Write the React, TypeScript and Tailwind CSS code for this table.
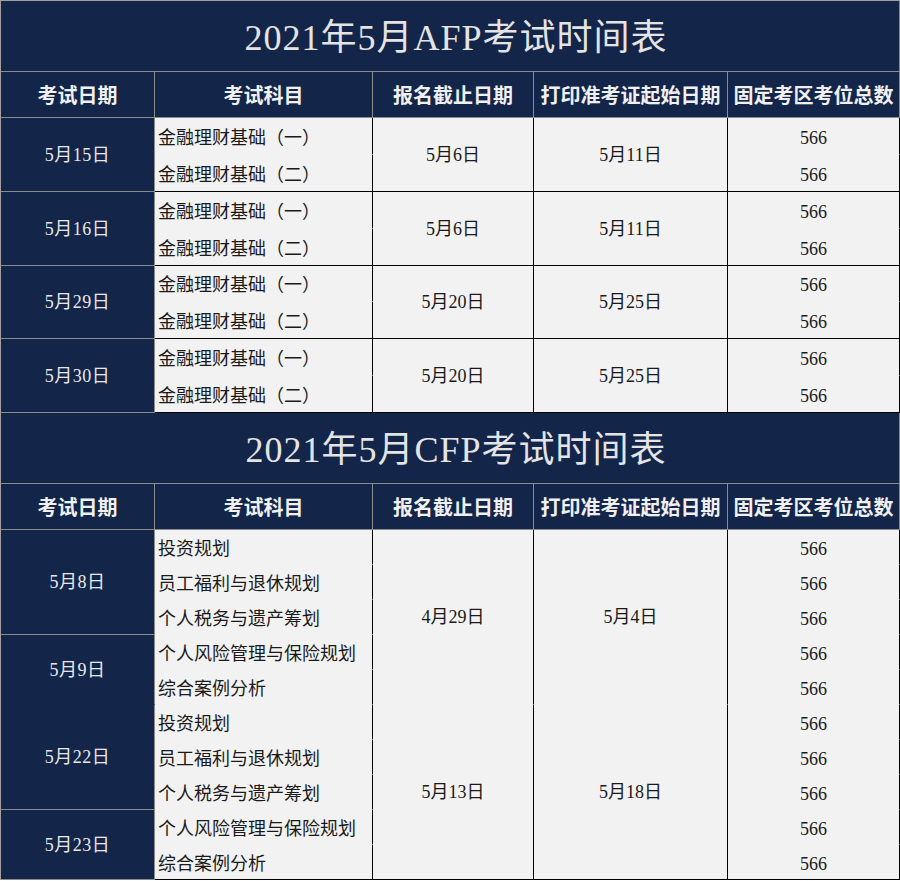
const NAVY = "bg-[#132549]"

const SERIF = "font-['Liberation_Serif','Noto_Sans_CJK_SC',serif]"
const SANS = "font-['Noto_Sans_CJK_SC',sans-serif]"

const HEADERS = ["考试日期", "考试科目", "报名截止日期", "打印准考证起始日期", "固定考区考位总数"]

const AFP = [
  { date: "5月15日", reg: "5月6日", print: "5月11日", h: [37, 37] },
  { date: "5月16日", reg: "5月6日", print: "5月11日", h: [37, 37] },
  { date: "5月29日", reg: "5月20日", print: "5月25日", h: [36, 37] },
  { date: "5月30日", reg: "5月20日", print: "5月25日", h: [37, 37] },
]

const CFP_SUBJECTS = [
  "投资规划",
  "员工福利与退休规划",
  "个人税务与遗产筹划",
  "个人风险管理与保险规划",
  "综合案例分析",
]

// date cells keyed by the sub-row they start on
const CFP_DATES: Record<number, { label: string; span: number; line: boolean }> = {
  0: { label: "5月8日", span: 3, line: true },
  3: { label: "5月9日", span: 2, line: false },
  5: { label: "5月22日", span: 3, line: true },
  8: { label: "5月23日", span: 2, line: true },
}

const CFP_GROUPS: Record<number, { reg: string; print: string; last: boolean }> = {
  0: { reg: "4月29日", print: "5月4日", last: false },
  5: { reg: "5月13日", print: "5月18日", last: true },
}

function TitleRow({ text }: { text: string }) {
  return (
    <tr className="h-[71px]">
      <td
        colSpan={5}
        className={`${NAVY} border-b border-r border-[#8c8c8c] pl-[12px] pt-[4px] text-center text-[36px] leading-none tracking-[1px] text-[#e4e4e4] ${SERIF}`}
      >
        {text}
      </td>
    </tr>
  )
}

function HeaderRow() {
  return (
    <tr className="h-[46px]">
      {HEADERS.map((h) => (
        <td
          key={h}
          className={`${NAVY} border-b border-r border-[#8c8c8c] text-center text-[20px] font-bold leading-none text-[#f0f0f0] ${SANS}`}
        >
          {h}
        </td>
      ))}
    </tr>
  )
}

const dateCell = `${NAVY} border-r border-[#8c8c8c] text-center text-[18px] leading-none tracking-[0.5px] text-[#e8e8e8] ${SERIF}`
const bodyCell = `bg-[#f2f2f2] border-r border-black text-[18px] leading-none text-[#1a1a1a] ${SERIF}`

export default function App() {
  return (
    <div className="w-[900px] h-[881px] overflow-hidden bg-white">
      <table className="w-[900px] table-fixed border-separate border-spacing-0 border-l border-t border-[#a0a0a0]">
        <colgroup>
          <col className="w-[154px]" />
          <col className="w-[218px]" />
          <col className="w-[161px]" />
          <col className="w-[194px]" />
          <col className="w-[172px]" />
        </colgroup>
        <tbody>
          <TitleRow text="2021年5月AFP考试时间表" />
          <HeaderRow />
          {AFP.flatMap((r) => [
            <tr key={r.date + "a"} style={{ height: r.h[0] }}>
              <td rowSpan={2} className={`${dateCell} border-b`}>
                {r.date}
              </td>
              <td className={`${bodyCell} border-b border-b-[#f2f2f2] pl-[3px] pt-[3px]`}>
                金融理财基础（一）
              </td>
              <td rowSpan={2} className={`${bodyCell} border-b text-center`}>
                {r.reg}
              </td>
              <td rowSpan={2} className={`${bodyCell} border-b text-center`}>
                {r.print}
              </td>
              <td className={`${bodyCell} border-b border-b-[#f2f2f2] pt-[3px] text-center`}>
                566
              </td>
            </tr>,
            <tr key={r.date + "b"} style={{ height: r.h[1] }}>
              <td className={`${bodyCell} border-b pl-[3px] pt-[3px]`}>金融理财基础（二）</td>
              <td className={`${bodyCell} border-b pt-[3px] text-center`}>566</td>
            </tr>,
          ])}
          <TitleRow text="2021年5月CFP考试时间表" />
          <HeaderRow />
          {Array.from({ length: 10 }).map((_, i) => {
            const d = CFP_DATES[i]
            const g = CFP_GROUPS[i]
            const lastRow = i === 9
            return (
              <tr key={i} className="h-[35px]">
                {d && (
                  <td
                    rowSpan={d.span}
                    className={`${dateCell} border-b ${d.line ? "border-b-[#8c8c8c]" : "border-b-[#132549]"}`}
                  >
                    {d.label}
                  </td>
                )}
                <td
                  className={`${bodyCell} border-b pl-[3px] pt-[3px] ${lastRow ? "border-b-black" : "border-b-[#f2f2f2]"}`}
                >
                  {CFP_SUBJECTS[i % 5]}
                </td>
                {g && (
                  <>
                    <td
                      rowSpan={5}
                      className={`${bodyCell} border-b text-center ${g.last ? "border-b-black" : "border-b-[#f2f2f2]"}`}
                    >
                      {g.reg}
                    </td>
                    <td
                      rowSpan={5}
                      className={`${bodyCell} border-b text-center ${g.last ? "border-b-black" : "border-b-[#f2f2f2]"}`}
                    >
                      {g.print}
                    </td>
                  </>
                )}
                <td
                  className={`${bodyCell} border-b pt-[3px] text-center ${lastRow ? "border-b-black" : "border-b-[#f2f2f2]"}`}
                >
                  566
                </td>
              </tr>
            )
          })}
        </tbody>
      </table>
    </div>
  )
}
